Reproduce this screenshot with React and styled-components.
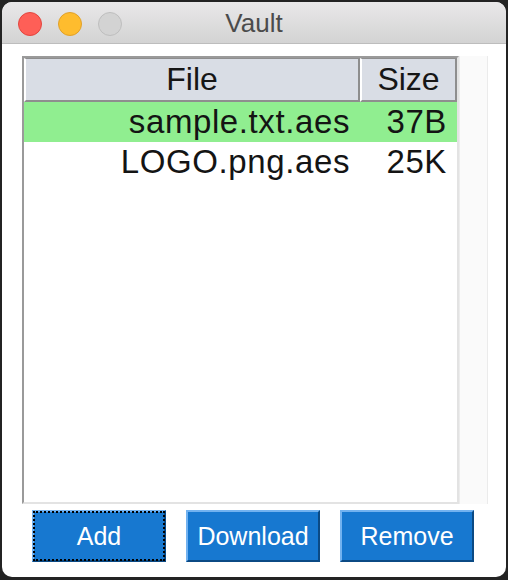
import React from "react";
import styled, { createGlobalStyle } from "styled-components";

const GlobalStyle = createGlobalStyle`
  html, body {
    margin: 0;
    padding: 0;
    background: #232323;
  }
  body {
    font-family: "Liberation Sans", Arial, sans-serif;
  }
`;

const files = [
  { name: "sample.txt.aes", size: "37B", selected: true },
  { name: "LOGO.png.aes", size: "25K", selected: false },
];

const App = () => {
  return (
    <>
      <GlobalStyle />
      <Page>
        <Window>
          <TitleBar>
            <Lights>
              <Light $color="#fe5f57" $edge="#e2463f" />
              <Light $color="#febc2e" $edge="#e0a02a" />
              <Light $color="#d3d3d3" $edge="#bebebe" />
            </Lights>
            <Title>Vault</Title>
          </TitleBar>
          <Content>
            <ListArea>
              <Table>
                <HeaderRow>
                  <HeaderCell>File</HeaderCell>
                  <HeaderCell>Size</HeaderCell>
                </HeaderRow>
                {files.map((f) => (
                  <Row key={f.name} $selected={f.selected}>
                    <Cell>{f.name}</Cell>
                    <Cell>{f.size}</Cell>
                  </Row>
                ))}
              </Table>
              <Trough />
            </ListArea>
            <Buttons>
              <Button $focused>Add</Button>
              <Button>Download</Button>
              <Button>Remove</Button>
            </Buttons>
          </Content>
        </Window>
      </Page>
    </>
  );
};

export default App;

const Page = styled.div`
  width: 508px;
  height: 580px;
  padding: 2px 2px 3px 2px;
  box-sizing: border-box;
`;

const Window = styled.div`
  width: 504px;
  height: 575px;
  background: #ffffff;
  border-radius: 10px;
  overflow: hidden;
  display: flex;
  flex-direction: column;
`;

const TitleBar = styled.div`
  height: 41px;
  flex: none;
  position: relative;
  display: flex;
  align-items: center;
  justify-content: center;
  background: linear-gradient(#e9e8e9, #d3d3d3);
  border-bottom: 1px solid #bdbdbd;
`;

const Lights = styled.div`
  position: absolute;
  left: 16px;
  top: 10px;
  display: flex;
  gap: 16px;
`;

const Light = styled.span`
  width: 22px;
  height: 22px;
  border-radius: 50%;
  background: ${(p) => p.$color};
  border: 1px solid ${(p) => p.$edge};
`;

const Title = styled.div`
  font-size: 26px;
  color: #4b4b4b;
  margin-top: 2px;
`;

const Content = styled.div`
  flex: 1;
  display: flex;
  flex-direction: column;
  padding: 12px 0 0 20px;
`;

const ListArea = styled.div`
  display: flex;
  height: 448px;
`;

const Table = styled.div`
  width: 433px;
  border-top: 2px solid #9a9a9a;
  border-left: 2px solid #9a9a9a;
  border-right: 2px solid #e3e3e3;
  border-bottom: 2px solid #e3e3e3;
  background: #ffffff;
  display: flex;
  flex-direction: column;
`;

const HeaderRow = styled.div`
  display: grid;
  grid-template-columns: 336px 97px;
`;

const HeaderCell = styled.div`
  height: 41px;
  background: #d9dde5;
  border-top: 1px solid #8e8e8e;
  border-left: 2px solid #ffffff;
  border-right: 2px solid #8e8e8e;
  border-bottom: 2px solid #8e8e8e;
  display: flex;
  align-items: center;
  justify-content: center;
  font-size: 32px;
  color: #161616;
`;

const Row = styled.div`
  display: grid;
  grid-template-columns: 336px 97px;
  height: 40px;
  background: ${(p) => (p.$selected ? "#90ee90" : "#ffffff")};
`;

const Cell = styled.div`
  display: flex;
  align-items: center;
  justify-content: flex-end;
  padding-right: 10px;
  font-size: 33px;
  letter-spacing: 0.6px;
  color: #141414;
`;

const Trough = styled.div`
  width: 27px;
  background: #fafafa;
  border-left: 1px solid #ececec;
  border-right: 1px solid #ebebeb;
`;

const Buttons = styled.div`
  display: flex;
  gap: 20px;
  margin-top: 6px;
  padding-left: 10px;
`;

const Button = styled.button`
  width: 134px;
  height: 52px;
  box-sizing: border-box;
  background: #1778d0;
  border-top: 2px solid #72b2f0;
  border-left: 2px solid #72b2f0;
  border-right: 2px solid #0b4a84;
  border-bottom: 2px solid #0b4a84;
  color: #ffffff;
  font-family: "Liberation Sans", Arial, sans-serif;
  font-size: 25px;
  padding: 0;
  outline: ${(p) => (p.$focused ? "2px dotted #000" : "none")};
  outline-offset: -3px;
`;
